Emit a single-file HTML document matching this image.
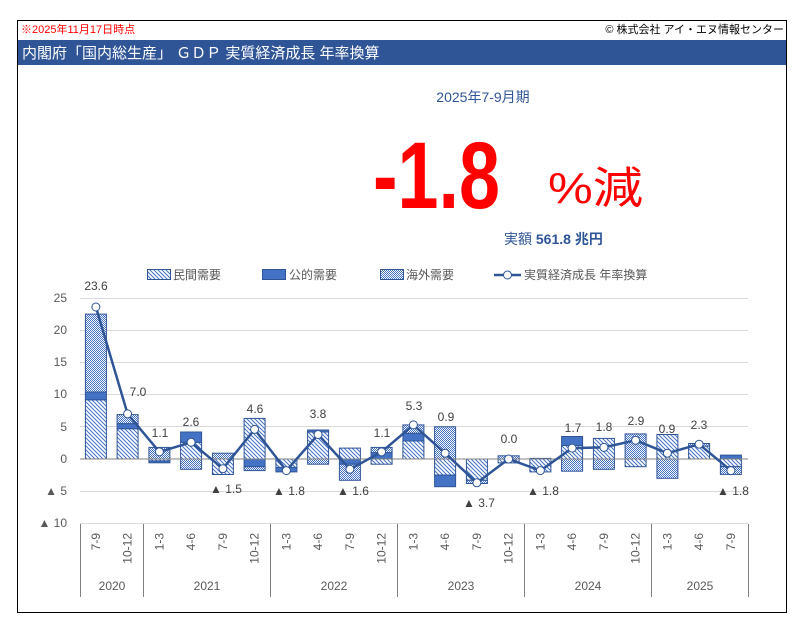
<!DOCTYPE html>
<html><head><meta charset="utf-8"><style>
html,body{margin:0;padding:0;background:#fff;}
svg{display:block;}
text{font-family:"Liberation Sans","Noto Sans CJK JP",sans-serif;}
</style></head><body>
<svg width="804" height="634" viewBox="0 0 804 634" xmlns="http://www.w3.org/2000/svg">
<defs>
<pattern id="hp" width="4" height="4" patternUnits="userSpaceOnUse">
<rect width="4" height="4" fill="#fff"/>
<path d="M-1,-1 L5,5 M-1,3 L1,5 M3,-1 L5,1" stroke="#4472C4" stroke-width="1"/>
</pattern>
<pattern id="hf" width="2" height="2" patternUnits="userSpaceOnUse">
<rect width="2" height="2" fill="#fff"/>
<rect width="1" height="1" fill="#4472C4"/>
<rect x="1" y="1" width="1" height="1" fill="#4472C4"/>
</pattern>
</defs>
<rect x="0" y="0" width="804" height="634" fill="#fff"/>
<rect x="17.5" y="20.5" width="769" height="592" fill="#fff" stroke="#000" stroke-width="1"/>
<text x="21" y="33" font-size="11" fill="#ff0000">※2025年11月17日時点</text>
<text x="784" y="33" font-size="11" fill="#000" text-anchor="end">© 株式会社 アイ・エヌ情報センター</text>
<rect x="18" y="40" width="768" height="25" fill="#2F5597"/>
<text x="22" y="58" font-size="15" fill="#fff">内閣府「国内総生産」 ＧＤＰ 実質経済成長 年率換算</text>

<text x="483" y="102" font-size="14" fill="#2F5597" text-anchor="middle">2025年7-9月期</text>
<text x="373" y="208" font-size="95" font-weight="bold" fill="#ff0000" textLength="127" lengthAdjust="spacingAndGlyphs">-1.8</text>
<text x="548" y="203" font-size="44" fill="#ff0000" textLength="95" lengthAdjust="spacingAndGlyphs">%減</text>
<text x="504" y="244" font-size="14" fill="#2F5597">実額 <tspan font-weight="bold">561.8 兆円</tspan></text>

<!-- legend -->
<g font-size="12" fill="#595959">
<rect x="147.5" y="269.5" width="23" height="10" fill="url(#hp)" stroke="#2F5597"/>
<text x="173" y="279">民間需要</text>
<rect x="262.5" y="269.5" width="23" height="10" fill="#4472C4" stroke="#2F5597"/>
<text x="289" y="279">公的需要</text>
<rect x="380.5" y="269.5" width="23" height="10" fill="url(#hf)" stroke="#2F5597"/>
<text x="406" y="279">海外需要</text>
<line x1="494" y1="275" x2="521" y2="275" stroke="#2F5597" stroke-width="2.5"/>
<circle cx="507.5" cy="275" r="4" fill="#fff" stroke="#2F5597" stroke-width="1"/>
<text x="524" y="279">実質経済成長 年率換算</text>
</g>

<!-- gridlines -->
<g stroke="#d9d9d9" stroke-width="1">
<line x1="80" y1="298.5" x2="748" y2="298.5"/>
<line x1="80" y1="330.5" x2="748" y2="330.5"/>
<line x1="80" y1="362.5" x2="748" y2="362.5"/>
<line x1="80" y1="394.5" x2="748" y2="394.5"/>
<line x1="80" y1="426.5" x2="748" y2="426.5"/>
<line x1="80" y1="491.5" x2="748" y2="491.5"/>
<line x1="80" y1="523.5" x2="748" y2="523.5"/>
</g>
<g font-size="12" fill="#595959" text-anchor="end">
<text x="67" y="302">25</text>
<text x="67" y="334">20</text>
<text x="67" y="366">15</text>
<text x="67" y="398">10</text>
<text x="67" y="431">5</text>
<text x="67" y="463">0</text>
<text x="67" y="495">▲ 5</text>
<text x="67" y="527">▲ 10</text>
</g>

<!-- bars -->
<g stroke="#2F5597" stroke-width="1">
<rect x="85.4" y="399.8" width="21" height="59.2" fill="url(#hp)"/><rect x="85.4" y="392" width="21" height="7.8" fill="#4472C4"/><rect x="85.4" y="314.1" width="21" height="77.9" fill="url(#hf)"/>
<rect x="117.1" y="428.7" width="21" height="30.3" fill="url(#hp)"/><rect x="117.1" y="423.6" width="21" height="5.1" fill="#4472C4"/><rect x="117.1" y="414.6" width="21" height="9" fill="url(#hf)"/>
<rect x="148.9" y="447.4" width="21" height="11.6" fill="url(#hf)"/><rect x="148.9" y="459" width="21" height="1.9" fill="url(#hp)"/><rect x="148.9" y="460.9" width="21" height="1.9" fill="#4472C4"/>
<rect x="180.6" y="442.3" width="21" height="16.7" fill="url(#hp)"/><rect x="180.6" y="432" width="21" height="10.3" fill="#4472C4"/><rect x="180.6" y="459" width="21" height="10.3" fill="url(#hf)"/>
<rect x="212.4" y="453.2" width="21" height="5.8" fill="url(#hf)"/><rect x="212.4" y="459" width="21" height="15.5" fill="url(#hp)"/>
<rect x="244.1" y="418.4" width="21" height="40.6" fill="url(#hp)"/><rect x="244.1" y="459" width="21" height="7.7" fill="#4472C4"/><rect x="244.1" y="466.7" width="21" height="3.9" fill="url(#hf)"/>
<rect x="275.9" y="459" width="21" height="8.4" fill="url(#hp)"/><rect x="275.9" y="467.4" width="21" height="4.5" fill="#4472C4"/>
<rect x="307.6" y="432" width="21" height="27" fill="url(#hp)"/><rect x="307.6" y="430" width="21" height="2" fill="#4472C4"/><rect x="307.6" y="459" width="21" height="5.2" fill="url(#hf)"/>
<rect x="339.4" y="448.1" width="21" height="10.9" fill="url(#hp)"/><rect x="339.4" y="459" width="21" height="5.2" fill="#4472C4"/><rect x="339.4" y="464.2" width="21" height="16.1" fill="url(#hf)"/>
<rect x="371.1" y="452.6" width="21" height="6.4" fill="#4472C4"/><rect x="371.1" y="447.4" width="21" height="5.2" fill="url(#hf)"/><rect x="371.1" y="459" width="21" height="5.2" fill="url(#hp)"/>
<rect x="402.9" y="441" width="21" height="18" fill="url(#hp)"/><rect x="402.9" y="433.2" width="21" height="7.8" fill="#4472C4"/><rect x="402.9" y="424.9" width="21" height="8.3" fill="url(#hf)"/>
<rect x="434.6" y="426.8" width="21" height="32.2" fill="url(#hf)"/><rect x="434.6" y="459" width="21" height="16.1" fill="url(#hp)"/><rect x="434.6" y="475.1" width="21" height="11.6" fill="#4472C4"/>
<rect x="466.4" y="459" width="21" height="21.3" fill="url(#hp)"/><rect x="466.4" y="480.3" width="21" height="3.2" fill="url(#hf)"/>
<rect x="498.1" y="455.8" width="21" height="3.2" fill="url(#hf)"/><rect x="498.1" y="459" width="21" height="3.9" fill="url(#hp)"/>
<rect x="529.9" y="458.4" width="21" height="13.5" fill="url(#hp)"/>
<rect x="561.6" y="445.5" width="21" height="13.5" fill="url(#hp)"/><rect x="561.6" y="436.5" width="21" height="9" fill="#4472C4"/><rect x="561.6" y="459" width="21" height="12.2" fill="url(#hf)"/>
<rect x="593.4" y="438.4" width="21" height="20.6" fill="url(#hp)"/><rect x="593.4" y="459" width="21" height="10.3" fill="url(#hf)"/>
<rect x="625.1" y="433.9" width="21" height="25.1" fill="url(#hf)"/><rect x="625.1" y="459" width="21" height="7.7" fill="url(#hp)"/>
<rect x="656.9" y="434.5" width="21" height="24.5" fill="url(#hp)"/><rect x="656.9" y="459" width="21" height="19.3" fill="url(#hf)"/>
<rect x="688.6" y="446.1" width="21" height="12.9" fill="url(#hp)"/><rect x="688.6" y="443.5" width="21" height="2.6" fill="url(#hf)"/>
<rect x="720.4" y="455.1" width="21" height="3.9" fill="#4472C4"/><rect x="720.4" y="459" width="21" height="7.7" fill="url(#hp)"/><rect x="720.4" y="466.7" width="21" height="7.7" fill="url(#hf)"/>
</g>
<line x1="80" y1="459" x2="748" y2="459" stroke="#808080" stroke-width="1"/>

<!-- line -->
<polyline fill="none" stroke="#2F5597" stroke-width="2.5" stroke-linejoin="round" points="95.9,307 127.6,413.9 159.4,451.9 191.1,442.3 222.9,468.7 254.6,429.4 286.4,470.6 318.1,434.5 349.9,469.3 381.6,451.9 413.4,424.9 445.1,453.2 476.9,482.8 508.6,459 540.4,470.6 572.1,448.1 603.9,447.4 635.6,440.3 667.4,453.2 699.1,444.2 730.9,470.6"/>
<g fill="#fff" stroke="#2F5597" stroke-width="1">
<circle cx="95.9" cy="307" r="4"/><circle cx="127.6" cy="413.9" r="4"/><circle cx="159.4" cy="451.9" r="4"/><circle cx="191.1" cy="442.3" r="4"/><circle cx="222.9" cy="468.7" r="4"/><circle cx="254.6" cy="429.4" r="4"/><circle cx="286.4" cy="470.6" r="4"/><circle cx="318.1" cy="434.5" r="4"/><circle cx="349.9" cy="469.3" r="4"/><circle cx="381.6" cy="451.9" r="4"/><circle cx="413.4" cy="424.9" r="4"/><circle cx="445.1" cy="453.2" r="4"/><circle cx="476.9" cy="482.8" r="4"/><circle cx="508.6" cy="459" r="4"/><circle cx="540.4" cy="470.6" r="4"/><circle cx="572.1" cy="448.1" r="4"/><circle cx="603.9" cy="447.4" r="4"/><circle cx="635.6" cy="440.3" r="4"/><circle cx="667.4" cy="453.2" r="4"/><circle cx="699.1" cy="444.2" r="4"/><circle cx="730.9" cy="470.6" r="4"/>
</g>

<!-- data labels -->
<g font-size="12" fill="#404040" text-anchor="middle">
<text x="96" y="290">23.6</text>
<text x="138" y="396">7.0</text>
<text x="160" y="437">1.1</text>
<text x="191" y="426">2.6</text>
<text x="226" y="493">▲ 1.5</text>
<text x="255" y="413">4.6</text>
<text x="289" y="495">▲ 1.8</text>
<text x="318" y="418">3.8</text>
<text x="353" y="495">▲ 1.6</text>
<text x="382" y="437">1.1</text>
<text x="414" y="410">5.3</text>
<text x="446" y="421">0.9</text>
<text x="479" y="507">▲ 3.7</text>
<text x="509" y="443">0.0</text>
<text x="543" y="495">▲ 1.8</text>
<text x="573" y="432">1.7</text>
<text x="604" y="431">1.8</text>
<text x="636" y="425">2.9</text>
<text x="667" y="433">0.9</text>
<text x="699" y="429">2.3</text>
<text x="733" y="495">▲ 1.8</text>
</g>

<!-- category axis -->
<g stroke="#808080" stroke-width="1">
<line x1="80.5" y1="524" x2="80.5" y2="597"/>
<line x1="143.5" y1="524" x2="143.5" y2="597"/>
<line x1="270.5" y1="524" x2="270.5" y2="597"/>
<line x1="397.5" y1="524" x2="397.5" y2="597"/>
<line x1="524.5" y1="524" x2="524.5" y2="597"/>
<line x1="651.5" y1="524" x2="651.5" y2="597"/>
<line x1="748.5" y1="524" x2="748.5" y2="597"/>
</g>
<g font-size="12" fill="#595959" text-anchor="end">
<text transform="translate(100,533) rotate(-90)">7-9</text>
<text transform="translate(131.6,533) rotate(-90)">10-12</text>
<text transform="translate(163.4,533) rotate(-90)">1-3</text>
<text transform="translate(195.1,533) rotate(-90)">4-6</text>
<text transform="translate(226.9,533) rotate(-90)">7-9</text>
<text transform="translate(258.6,533) rotate(-90)">10-12</text>
<text transform="translate(290.4,533) rotate(-90)">1-3</text>
<text transform="translate(322.1,533) rotate(-90)">4-6</text>
<text transform="translate(353.9,533) rotate(-90)">7-9</text>
<text transform="translate(385.6,533) rotate(-90)">10-12</text>
<text transform="translate(417.4,533) rotate(-90)">1-3</text>
<text transform="translate(449.1,533) rotate(-90)">4-6</text>
<text transform="translate(480.9,533) rotate(-90)">7-9</text>
<text transform="translate(512.6,533) rotate(-90)">10-12</text>
<text transform="translate(544.4,533) rotate(-90)">1-3</text>
<text transform="translate(576.1,533) rotate(-90)">4-6</text>
<text transform="translate(607.9,533) rotate(-90)">7-9</text>
<text transform="translate(639.6,533) rotate(-90)">10-12</text>
<text transform="translate(671.4,533) rotate(-90)">1-3</text>
<text transform="translate(703.1,533) rotate(-90)">4-6</text>
<text transform="translate(734.9,533) rotate(-90)">7-9</text>
</g>
<g font-size="12" fill="#595959" text-anchor="middle">
<text x="112" y="590">2020</text>
<text x="207" y="590">2021</text>
<text x="334" y="590">2022</text>
<text x="461" y="590">2023</text>
<text x="588" y="590">2024</text>
<text x="700" y="590">2025</text>
</g>
</svg>
</body></html>
